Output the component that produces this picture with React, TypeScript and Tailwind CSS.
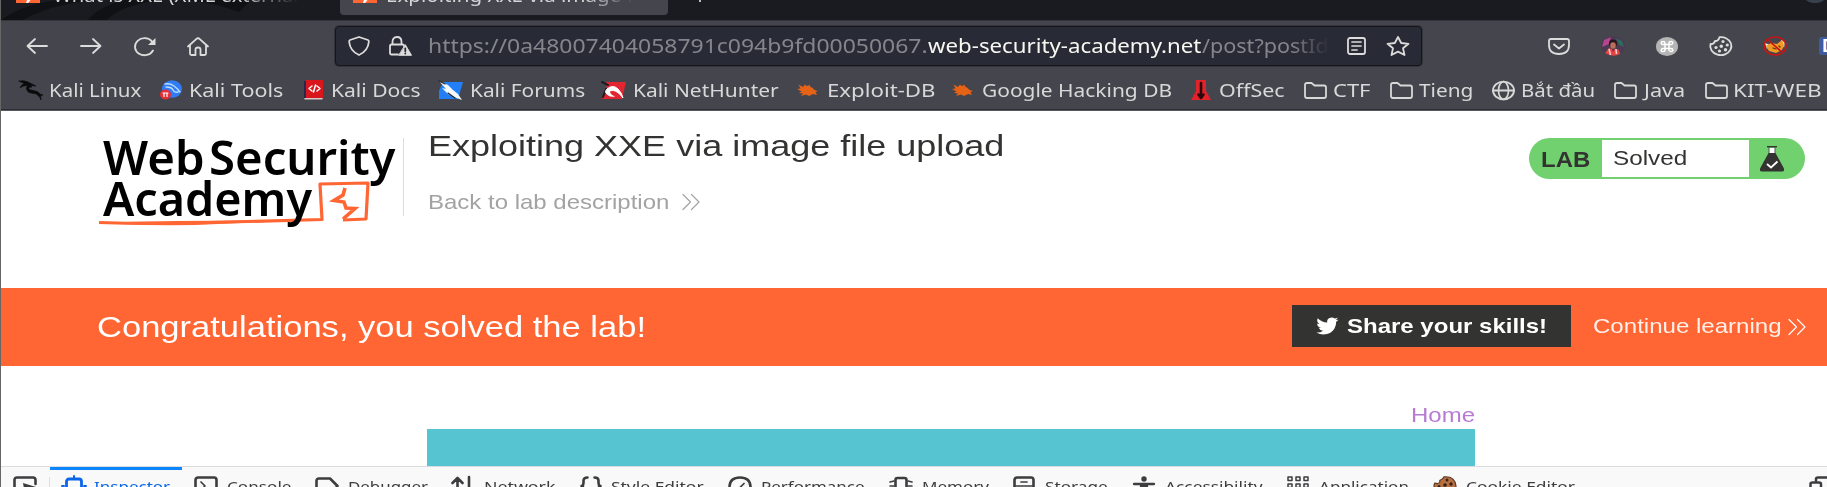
import { useLayoutEffect, useRef, useState } from "react";
import type { ReactNode } from "react";

/** Single line of text stretched horizontally to the width of its box. */
function Fit({ children, className }: { children: ReactNode; className: string }) {
  const box = useRef<HTMLSpanElement>(null);
  const text = useRef<HTMLSpanElement>(null);
  const [scale, setScale] = useState(1);
  useLayoutEffect(() => {
    if (box.current && text.current) {
      setScale(box.current.clientWidth / text.current.offsetWidth);
    }
  }, []);
  return (
    <span ref={box} className={`block shrink-0 whitespace-nowrap ${className}`}>
      <span ref={text} className="inline-block origin-left" style={{ transform: `scaleX(${scale})` }}>
        {children}
      </span>
    </span>
  );
}

function Icon({ w, h, className = "", children }: { w: number; h: number; className?: string; children: ReactNode }) {
  return (
    <svg
      width={w}
      height={h}
      viewBox={`0 0 ${w} ${h}`}
      fill="none"
      stroke="currentColor"
      strokeWidth="1.800"
      strokeLinecap="round"
      strokeLinejoin="round"
      className={`block shrink-0 overflow-visible ${className}`}
    >
      {children}
    </svg>
  );
}

function Favicon({ className }: { className: string }) {
  return (
    <Icon w={24} h={3} className={className}>
      <path d="M0 0h24v3h-24z" fill="#ff6633" stroke="none" />
      <path d="M11 0h3.5L12 3h-2z" fill="#fff" stroke="none" />
    </Icon>
  );
}

function TabStrip() {
  return (
    <div className="relative flex h-[20px] items-start overflow-hidden bg-[#1a1b20]">
      <svg width="300" height="20" viewBox="0 0 300 20" className="absolute left-0 top-0">
        <path d="M0 20Q22 4 58 0H92Q48 5 22 20zM87 20Q98 6 124 0H160Q120 5 106 20z" fill="#101115" />
        <path d="M185 0Q215 3 238 12L250 0z" fill="#101115" />
      </svg>
      <Favicon className="relative ml-[15px]" />
      <Fit className="relative -mt-[16px] ml-[13px] w-[246px] text-[18px] leading-[22px] text-[#d5d5d8] [mask-image:linear-gradient(to_right,black_75%,transparent)]">
        What is XXE (XML external
      </Fit>
      <div className="relative ml-[41px] flex h-[15px] w-[332px] items-start overflow-hidden rounded-b-[4px] bg-[#45464d]">
        <Favicon className="ml-[13px]" />
        <Fit className="-mt-[16px] ml-[9px] w-[248px] text-[18px] leading-[22px] text-[#d5d5d8] [mask-image:linear-gradient(to_right,black_80%,transparent)]">
          Exploiting XXE via image f
        </Fit>
      </div>
      <span className="ml-[31px] h-[2px] w-[2px] bg-[#bbb]" />
      <span className="-mt-[17px] ml-[1102px] h-[20px] w-[24px] shrink-0 rounded-full bg-[#39404d]" />
    </div>
  );
}

function NavBar() {
  return (
    <div className="flex h-[50px] items-center overflow-hidden text-[#dcdcdc]">
      <Icon w={22} h={16} className="ml-[25px]">
        <path d="M21 8H1.5M9 1L1.5 8L9 15" />
      </Icon>
      <Icon w={22} h={16} className="ml-[32px]">
        <path d="M1 8H20.500M13 1L20.500 8L13 15" />
      </Icon>
      <Icon w={22} h={19} className="ml-[32px]">
        <path d="M19 13.500A9.500 8.500 0 1 1 18 4.500" />
        <path d="M21.500 1V8H14z" fill="currentColor" stroke="none" />
      </Icon>
      <Icon w={22} h={19} className="ml-[31px]">
        <path d="M1 9.500L9.500 1.800Q11 .6 12.500 1.800L21 9.500M3 8V16.500Q3 18 4.500 18H8.500V12.500Q8.500 10.500 11 10.500T13.500 12.500V18H17.500Q19 18 19 16.500V8" />
      </Icon>

      <div className="-mt-[1px] ml-[126px] flex h-[40px] w-[1087px] shrink-0 items-center rounded-[4px] border border-[#15161b] bg-[#282a36] shadow-[0_0_0_1px_rgba(20,21,26,0.35)]">
        <Icon w={22} h={20} className="ml-[12px]">
          <path d="M11 1L20 4Q21 4.400 20.800 6Q20 15 11 19Q2 15 1.200 6Q1 4.400 2 4z" />
        </Icon>
        <Icon w={23} h={20} className="ml-[19px]">
          <path d="M9 18.500H2.500Q1 18.500 1 17V10Q1 8.500 2.500 8.500H13.500Q15 8.500 15 10M3.500 8.500V6Q3.500 1 8 1T12.500 6V8.500" />
          <path d="M16.500 9L22.500 19.300H10z" fill="currentColor" stroke="currentColor" strokeWidth="1" />
          <path d="M16.300 12.500V15.300M16.300 17.300V17.500" stroke="#282a36" strokeWidth="1.800" />
        </Icon>
        <Fit className="ml-[16px] w-[500px] text-[19px] leading-[32px] text-[#85868c]">
          https://0a48007404058791c094b9fd00050067.
        </Fit>
        <Fit className="w-[274px] text-[19px] leading-[32px] text-[#f8f8f2]">web-security-academy.net</Fit>
        <Fit className="w-[127px] text-[19px] leading-[32px] text-[#85868c] [mask-image:linear-gradient(to_right,black_70%,transparent)]">
          /post?postId
        </Fit>
        <Icon w={19} h={18} className="ml-[18px]">
          <rect x="1" y="1" width="17" height="16" rx="2" />
          <path d="M5 5H14M5 9H14M5 13H10" strokeWidth="1.700" />
        </Icon>
        <Icon w={24} h={20} className="ml-[20px]">
          <path d="M12 1L15.200 7L22.500 7.800L17 12.300L18.500 19L12 15.600L5.500 19L7 12.300L1.500 7.800L8.800 7z" />
        </Icon>
      </div>

      <Icon w={22} h={17} className="ml-[126px]">
        <path d="M3 1H19Q21 1 21 3V7Q21 16 11 16T1 7V3Q1 1 3 1zM6 6.500L11 10.500L16 6.500" />
      </Icon>
      <svg width="24" height="20" viewBox="0 0 24 20" className="ml-[31px] block shrink-0">
        <ellipse cx="12" cy="10" rx="12" ry="10" fill="#4b3a50" />
        <path d="M3 4L10 1L8 8L1 11z" fill="#b54591" />
        <path d="M15 2L21 5L23 11L18 9z" fill="#2e6a60" />
        <ellipse cx="12" cy="7.500" rx="4" ry="4" fill="#24161b" />
        <ellipse cx="12" cy="9.500" rx="2.800" ry="3.300" fill="#b96e5c" />
        <path d="M4 17L8 12L11 13L12 16L14 12.500L18 14L19 18Q12 22 4 17z" fill="#e84444" />
        <path d="M8 13L9.500 19M15 13L15.500 18" stroke="#f6cfcf" strokeWidth="1.500" />
      </svg>
      <Icon w={22} h={19} className="ml-[31px]">
        <ellipse cx="11" cy="9.500" rx="11" ry="9.500" fill="#b5b5b5" stroke="none" />
        <path
          d="M9 7.500H13V11.500H9zM9 7.500H7Q5.200 7.500 5.200 6T7 4.500T9 6zM13 7.500V6Q13 4.500 15 4.500T16.800 6T15 7.500zM13 11.500H15Q16.800 11.500 16.800 13T15 14.500T13 13zM9 11.500V13Q9 14.500 7 14.500T5.200 13T7 11.500z"
          stroke="#fff"
          strokeWidth="1.500"
        />
      </Icon>
      <Icon w={24} h={20} className="ml-[31px]">
        <path d="M10.500 1.200Q14 .6 17 2.200A10.600 9 0 1 1 1.500 8Q5 8.500 6 5Q9.500 5.200 10.500 1.200z" />
        <g fill="currentColor" stroke="none">
          <circle cx="14" cy="5.500" r="1.600" />
          <circle cx="18.300" cy="9" r="1.600" />
          <circle cx="12.300" cy="10.300" r="1.700" />
          <circle cx="7" cy="11.500" r="1.600" />
          <circle cx="16.500" cy="13.700" r="1.700" />
          <circle cx="10.500" cy="15" r="1.600" />
        </g>
      </Icon>
      <Icon w={24} h={20} className="ml-[30px]">
        <path d="M2 7L7 9L4 13zM18 4L22 5L21 12z" fill="#f5eee0" stroke="none" />
        <path d="M3 10L8 7L14 8L19 4L21 9L19 14L13 17L6 15z" fill="#f39a24" stroke="none" />
        <path d="M10 12L13 13M16 10L17 11" stroke="#5c3510" strokeWidth="1.300" />
        <ellipse cx="12" cy="10" rx="11" ry="9" stroke="#c91414" strokeWidth="1.600" />
        <path d="M4.500 3.500L19.500 16.500" stroke="#c91414" strokeWidth="1.600" />
      </Icon>
      <span className="ml-[32px] h-[18px] w-[20px] shrink-0 rounded-[2px] bg-[#3f5b9e] pl-[3px] text-[17px] font-bold leading-[18px] text-white">
        D
      </span>
    </div>
  );
}

function Folder({ className }: { className: string }) {
  return (
    <Icon w={23} h={17} className={className}>
      <path d="M1 3Q1 1 3 1H7.500L10.500 3.500H20Q22 3.500 22 5.500V14Q22 16 20 16H3Q1 16 1 14z" />
    </Icon>
  );
}

function Splat({ className }: { className: string }) {
  return (
    <Icon w={22} h={14} className={className}>
      <path
        d="M3.500 5.500L1.500 1.500L6 4L8 1.500L9.500 3L13 2L13 3.500Q16 4.500 17.500 7L21 8L18.500 9L20 12L16 11L12 13L9 11.500L4 13L6 10.500L2 10L4.500 8.500L0 6z"
        fill="#ee6413"
        fillOpacity=".95"
        stroke="none"
      />
    </Icon>
  );
}

function Bookmarks() {
  const label = "text-[18.500px] leading-[30px]";
  return (
    <div className="flex h-[38px] items-center overflow-hidden text-[#d8d8d8]">
      <Icon w={24} h={20} className="ml-[18px]">
        <path
          d="M0 1Q5 0 9 2L17 6L11 5.500L13 7Q9 7 10 9.500Q13 10 18 11.500Q22 13 22 20Q20 14 15 13.500Q8 13 7.500 9Q7 6.500 9 5.500Q4 5 1 8Q2 5 5 3.500zM18 13L24 15L20 16z"
          fill="#0a0a0c"
          stroke="#0a0a0c"
          strokeWidth=".6"
        />
      </Icon>
      <Fit className={`ml-[6px] w-[92px] ${label}`}>Kali Linux</Fit>
      <Icon w={22} h={20} className="ml-[19px]">
        <ellipse cx="12" cy="9" rx="10" ry="8.800" fill="#2f7cf6" stroke="none" />
        <path d="M5 4Q10 3 14 6T20 12M6 7Q12 7 13 10T18 12" stroke="#b9dcff" strokeWidth="1.400" />
        <ellipse cx="5.500" cy="14.500" rx="5.500" ry="5" fill="#e92d35" stroke="none" />
        <path d="M4 13V16.500M7 13V16.500M3 13H8" stroke="#fff" strokeWidth="1.200" />
      </Icon>
      <Fit className={`ml-[7px] w-[94px] ${label}`}>Kali Tools</Fit>
      <Icon w={19} h={20} className="ml-[21px]">
        <path d="M0 1H3V19H0z" fill="#28284e" stroke="none" />
        <path d="M2 0H19V18H2z" fill="#d8161c" stroke="none" />
        <path d="M1 18.800H18" stroke="#d9c8c8" strokeWidth="1.600" />
        <path d="M8 6L5 8.500L8 11M13 6L16 8.500L13 11M11.500 5L9.500 12" stroke="#fff" strokeWidth="1.500" />
      </Icon>
      <Fit className={`ml-[8px] w-[90px] ${label}`}>Kali Docs</Fit>
      <Icon w={24} h={19} className="ml-[18px]">
        <path d="M4 1H24L19 18H0V10z" fill="#237ff5" stroke="none" />
        <path d="M0 0L9 4L14 9L19 13L23 19L15 16L9 13L3 7L7 8z" fill="#f4f8fa" stroke="none" />
        <path d="M0 0L6 3M9 12L16 17" stroke="#25262b" strokeWidth="1.200" />
      </Icon>
      <Fit className={`ml-[7px] w-[115px] ${label}`}>Kali Forums</Fit>
      <Icon w={24} h={19} className="ml-[17px]">
        <path d="M4 1H24L20 18H0L5 9z" fill="#e12632" stroke="none" />
        <path d="M0 1L6 4M4 8L1 16" stroke="#211a22" strokeWidth="2" />
        <path d="M8 15Q1 12 5 8Q11 3 16 8Q20 12 21 17Q16 10 11 9.500Q7 10 12 15z" fill="#fff" stroke="#fff" strokeWidth="1" />
        <path d="M8 10.500Q11 9 14 12L12 15Q8 13 8 10.500z" fill="#e12632" stroke="none" />
      </Icon>
      <Fit className={`ml-[7px] w-[146px] ${label}`}>Kali NetHunter</Fit>
      <Splat className="ml-[18px]" />
      <Fit className={`ml-[8px] w-[108px] ${label}`}>Exploit-DB</Fit>
      <Splat className="ml-[17px]" />
      <Fit className={`ml-[8px] w-[190px] ${label}`}>Google Hacking DB</Fit>
      <Icon w={20} h={20} className="ml-[19px]">
        <path d="M5 0H15V11L20 20H0L5 11z" fill="#e0232b" stroke="none" />
        <path d="M10 3V17M7.500 14.500L10 18L12.500 14.500" stroke="#2b070a" strokeWidth="2.600" />
      </Icon>
      <Fit className={`ml-[8px] w-[66px] ${label}`}>OffSec</Fit>
      <Folder className="ml-[19px]" />
      <Fit className={`ml-[6px] w-[38px] ${label}`}>CTF</Fit>
      <Folder className="ml-[19px]" />
      <Fit className={`ml-[6px] w-[54px] ${label}`}>Tieng</Fit>
      <Icon w={23} h={19} className="ml-[19px]">
        <ellipse cx="11.500" cy="9.500" rx="10.500" ry="8.800" />
        <ellipse cx="11.500" cy="9.500" rx="5" ry="8.800" strokeWidth="1.700" />
        <path d="M1 9.500H22" />
      </Icon>
      <Fit className={`ml-[6px] w-[74px] ${label}`}>Bắt đầu</Fit>
      <Folder className="ml-[19px]" />
      <Fit className={`ml-[7px] w-[41px] ${label}`}>Java</Fit>
      <Folder className="ml-[20px]" />
      <Fit className={`ml-[5px] w-[89px] ${label}`}>KIT-WEB</Fit>
    </div>
  );
}

function Chevrons({ className }: { className: string }) {
  return (
    <Icon w={18} h={16} className={className}>
      <path d="M1 .5L8.500 8L1 15.500M9.500 .5L17 8L9.500 15.500" strokeWidth="1.200" />
    </Icon>
  );
}

function Logo() {
  return (
    <div className="relative ml-[102px] h-[115px] w-[293px] shrink-0 font-['Noto_Sans'] text-[46px] font-semibold leading-[42px] text-black">
      <div className="flex pt-[25px]">
        <Fit className="w-[102px]">Web</Fit>
        <Fit className="ml-[4px] w-[187px]">Security</Fit>
      </div>
      <Fit className="-mt-[1px] w-[209px]">Academy</Fit>
      <svg width="280" height="46" viewBox="0 0 280 46" fill="none" className="absolute -left-[5px] top-[69px] -z-10">
        <path d="M1 42.500Q60 44.500 130 42L224 39.500L222 4L270 3L268 39L245 40" stroke="#ff6633" strokeWidth="3.200" strokeLinejoin="round" />
        <path d="M1 42.500Q60 47 120 44L200 40.500Q100 40 1 42.500z" fill="#ff6633" />
        <path d="M247 8L245 15L236 20.500L246 22L248 28L257 28.500L245 39" stroke="#ff6633" strokeWidth="3.600" />
      </svg>
    </div>
  );
}

function SiteHeader() {
  return (
    <header className="isolate flex h-[177px] items-start">
      <Logo />
      <div className="ml-[7px] mt-[27px] h-[78px] w-px shrink-0 bg-[#dcdcdc]" />
      <div className="ml-[24px] w-[580px] shrink-0">
        <Fit className="mt-[17px] w-[576px] text-[29.500px] leading-[36px] text-[#333332]">
          Exploiting XXE via image file upload
        </Fit>
        <div className="mt-[25px] flex items-center text-[#a3a3a3]">
          <Fit className="w-[241px] text-[21px] leading-[26px]">Back to lab description</Fit>
          <Chevrons className="ml-[13px]" />
        </div>
      </div>
      <div className="ml-[521px] mt-[27px] flex h-[41px] w-[276px] shrink-0 items-center rounded-full bg-[#70d16e] text-[#333332]">
        <Fit className="ml-[12px] mt-[2px] w-[49px] text-[21.500px] font-bold leading-[26px]">LAB</Fit>
        <div className="ml-[12px] h-[37px] w-[147px] bg-white pl-[11px] pt-[5px]">
          <Fit className="w-[74px] text-[21px] leading-[26px]">Solved</Fit>
        </div>
        <svg width="24" height="26" viewBox="0 0 24 26" className="ml-[11px] block">
          <path d="M9 2H15V8H9z" fill="#fff" />
          <path d="M7 .7H17" stroke="#333332" strokeWidth="1.400" />
          <path d="M9 1V7M15 1V7" stroke="#555" strokeWidth="1" />
          <path d="M8.500 7H15.500L23.700 22Q25 25.500 22 25.500H2Q-1 25.500 .3 22z" fill="#333332" />
          <path d="M7 18L11 21.500L17.500 15.500" stroke="#fff" strokeWidth="1.800" fill="none" />
        </svg>
      </div>
    </header>
  );
}

function Banner() {
  return (
    <section className="flex h-[78px] items-center bg-[#ff6633] text-white">
      <Fit className="ml-[96px] w-[549px] text-[29.500px] leading-[36px]">Congratulations, you solved the lab!</Fit>
      <div className="-mt-[2px] ml-[646px] flex h-[42px] w-[279px] shrink-0 items-center bg-[#333332]">
        <Icon w={23} h={18} className="ml-[24px]">
          <path
            d="M22.500 2.200Q21.300 3 20 3.100Q21.300 2 21.700 .6Q20.300 1.400 18.800 1.600A4.600 4.300 0 0 0 11.200 5.500Q5.500 5.300 1.700 1.200Q.2 4.700 3.200 6.900Q2 6.900 1.100 6.400Q1.200 9.700 4.800 10.700Q3.700 11 2.700 10.800Q3.700 13.500 7 13.700Q4.300 15.900 .4 15.500Q3.700 17.500 7.500 17.500Q15 17.300 18.500 11.500Q20.200 8.500 20.200 4.700Q21.700 3.700 22.500 2.200z"
            fill="#fff"
            stroke="none"
          />
        </Icon>
        <Fit className="ml-[8px] w-[200px] text-[21px] font-bold leading-[26px]">Share your skills!</Fit>
      </div>
      <Fit className="-mt-[2px] ml-[22px] w-[189px] text-[21px] leading-[26px] text-[#fff0ea]">Continue learning</Fit>
      <Chevrons className="-mt-[1px] ml-[6px]" />
    </section>
  );
}

function DevTools() {
  const label = "text-[15px] leading-[20px]";
  return (
    <div className="flex h-[21px] items-start overflow-hidden border-t border-[#dcdcdf] bg-[#f9f9fa] text-[#3d3d3f]">
      <div className="flex h-[38px] shrink-0 items-center">
        <Icon w={24} h={20} className="ml-[12px]">
          <path d="M8 18H4Q1.500 18 1.500 15.500V4Q1.500 1.500 4 1.500H20Q22.500 1.500 22.500 4V8" strokeWidth="2.600" />
          <path d="M10 7L23 11L18 13L22 18L15 14L12 18z" fill="currentColor" stroke="none" />
        </Icon>
        <div className="ml-[12px] mt-[10px] h-[28px] w-px bg-[#dedee0]" />
      </div>
      <div className="flex h-[38px] w-[132px] shrink-0 items-center border-t-[3px] border-[#0a84ff] text-[#0a66e8]">
        <Icon w={24} h={20} className="-mt-[3px] ml-[12px]">
          <rect x="4.500" y="3" width="15" height="15" rx="2.500" strokeWidth="2.800" />
          <path d="M12 0V2M0 10H2M22 10H24" strokeWidth="2" />
        </Icon>
        <Fit className="-mt-[3px] ml-[8px] w-[76px] text-[15px] leading-[20px]">Inspector</Fit>
      </div>
      <div className="flex h-[38px] shrink-0 items-center">
        <Icon w={24} h={20} className="ml-[12px]">
          <rect x="1.500" y="1.500" width="21" height="17" rx="2.500" strokeWidth="2.600" />
          <path d="M7 6L11 10L7 14" strokeWidth="1.700" />
        </Icon>
        <Fit className={`ml-[9px] w-[64px] ${label}`}>Console</Fit>
        <Icon w={24} h={18} className="ml-[24px]">
          <path d="M4 1.500H15L22.500 9L15 16.500H4Q1.500 16.500 1.500 14V4Q1.500 1.500 4 1.500z" strokeWidth="2.600" />
        </Icon>
        <Fit className={`ml-[9px] w-[80px] ${label}`}>Debugger</Fit>
        <Icon w={24} h={20} className="ml-[23px]">
          <path d="M6.500 19V2M1.500 7L6.500 2L11.500 7M18 1V18M13 13L18 18L23 13" strokeWidth="2.600" />
        </Icon>
        <Fit className={`ml-[9px] w-[71px] ${label}`}>Network</Fit>
        <Icon w={22} h={20} className="ml-[25px]">
          <path d="M7.500 1.500Q3.500 1.500 3.500 4.500V7Q3.500 9.500 1.500 10Q3.500 10.500 3.500 13V15.500Q3.500 18.500 7.500 18.500M14.500 1.500Q18.500 1.500 18.500 4.500V7Q18.500 9.500 20.500 10Q18.500 10.500 18.500 13V15.500Q18.500 18.500 14.500 18.500" strokeWidth="2.600" />
        </Icon>
        <Fit className={`ml-[9px] w-[93px] ${label}`}>Style Editor</Fit>
        <Icon w={24} h={20} className="ml-[24px]">
          <path d="M5 18Q1.500 15 1.500 10.500Q2 1.500 12 1.500T22.500 10.500Q22.500 15 19 18" strokeWidth="2.600" />
          <path d="M10 13.500L16 7.500" strokeWidth="1.700" />
        </Icon>
        <Fit className={`ml-[9px] w-[104px] ${label}`}>Performance</Fit>
        <Icon w={24} h={20} className="ml-[24px]">
          <path d="M6.500 18V4Q6.500 2 8.500 2H15.500Q17.500 2 17.500 4V18" strokeWidth="2.600" />
          <path d="M1 6L5 5M1 10H5M1 14H5M23 6L19 5M23 10H19M23 14H19" strokeWidth="1.600" />
        </Icon>
        <Fit className={`ml-[9px] w-[67px] ${label}`}>Memory</Fit>
        <Icon w={22} h={20} className="ml-[24px]">
          <rect x="1.500" y="1.500" width="19" height="17" rx="2.500" strokeWidth="2.600" />
          <path d="M8 6H14M2 10H20M8 14H14" strokeWidth="1.700" />
        </Icon>
        <Fit className={`ml-[10px] w-[63px] ${label}`}>Storage</Fit>
        <Icon w={22} h={20} className="ml-[25px]">
          <circle cx="11" cy="3" r="2.700" fill="currentColor" stroke="none" />
          <path d="M1 8H21M8 8H14V13L16 20M8 8V13L6 20" strokeWidth="2.300" />
          <path d="M8 8H14V14H8z" fill="currentColor" stroke="none" />
        </Icon>
        <Fit className={`ml-[10px] w-[98px] ${label}`}>Accessibility</Fit>
        <Icon w={22} h={20} className="ml-[24px]">
          <g strokeWidth="1.500">
            <rect x="1" y="1" width="4" height="3.600" />
            <rect x="9" y="1" width="4" height="3.600" />
            <rect x="17" y="1" width="4" height="3.600" />
            <rect x="1" y="8" width="4" height="3.600" />
            <rect x="9" y="8" width="4" height="3.600" />
            <rect x="17" y="8" width="4" height="3.600" />
          </g>
        </Icon>
        <Fit className={`ml-[10px] w-[90px] ${label}`}>Application</Fit>
        <Icon w={24} h={20} className="ml-[24px]">
          <path d="M11 .8Q22 0 23 10Q22 19 12 19.500Q2 19 1 10Q1 8 2 7Q5 8.500 7 6Q6 4 8.500 3.500Q10 3 11 .8z" fill="#b9703f" stroke="#5b3a2b" strokeWidth="1.200" />
          <g fill="#36221b" stroke="none">
            <circle cx="14" cy="4" r="1.500" />
            <circle cx="18" cy="8" r="1.700" />
            <circle cx="12" cy="9" r="1.800" />
            <circle cx="6" cy="10.500" r="1.500" />
          </g>
        </Icon>
        <Fit className={`ml-[9px] w-[109px] ${label}`}>Cookie Editor</Fit>
        <Icon w={24} h={20} className="ml-[234px]">
          <path d="M7 5V3Q7 1.500 9 1.500H23M1.500 18V8Q1.500 6.500 3.500 6.500H10Q12 6.500 12 8V18" strokeWidth="2.500" />
        </Icon>
      </div>
    </div>
  );
}

export default function App() {
  return (
    <div className="flex h-[487px] w-[1827px] flex-col overflow-hidden border-l border-[#666] bg-white font-['Liberation_Sans',sans-serif]">
      <div className="shrink-0 bg-[#45464d] font-['Noto_Sans',sans-serif]">
        <TabStrip />
        <div className="h-px bg-[#34353a]" />
        <NavBar />
        <Bookmarks />
        <div className="h-px bg-[#2d2e33]" />
        <div className="h-px bg-[#59595d]" />
      </div>
      <SiteHeader />
      <Banner />
      <main className="h-[100px] shrink-0 pl-[426px] pt-[35px]">
        <div className="flex h-[28px] w-[1048px] justify-end">
          <Fit className="w-[64px] text-[21px] leading-[27px] text-[#b67bd3]">Home</Fit>
        </div>
        <div className="h-[37px] w-[1048px] bg-[#57c4d1]" />
      </main>
      <div className="shrink-0 font-['Noto_Sans',sans-serif]">
        <DevTools />
      </div>
    </div>
  );
}
